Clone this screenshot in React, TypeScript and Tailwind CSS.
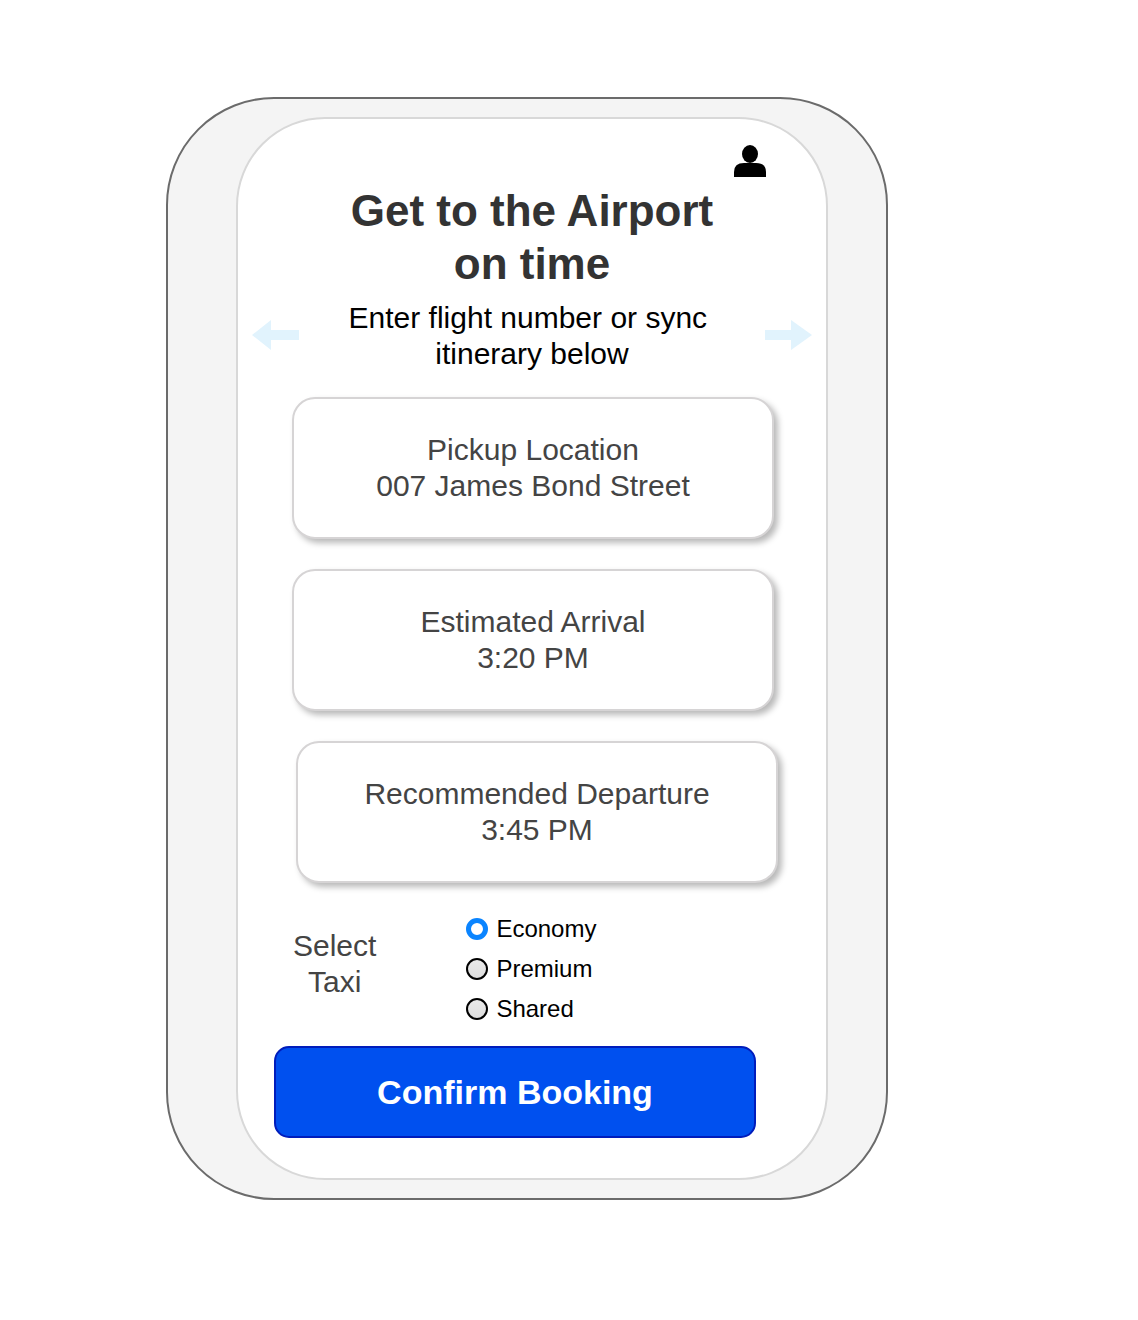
import { useState } from "react";

const details = [
  { label: "Pickup Location", value: "007 James Bond Street", place: "" },
  { label: "Estimated Arrival", value: "3:20 PM", place: "" },
  { label: "Recommended Departure", value: "3:45 PM", place: "ml-1" },
];

const taxis = ["Economy", "Premium", "Shared"];

function ArrowIcon({ path }: { path: string }) {
  return (
    <svg viewBox="0 0 47 30" className="block h-[30px] w-[47px] fill-[#e1f3fd]" aria-hidden="true">
      <path d={path} />
    </svg>
  );
}

function DetailCard({ label, value, place }: { label: string; value: string; place: string }) {
  return (
    <section
      className={`w-full max-w-[482px] rounded-[23px] border-2 border-[#d6d4d5] bg-white px-4 py-[33px] text-center text-[30px] leading-9 text-[#444444] shadow-[4px_4px_6px_rgba(0,0,0,0.28)] ${place}`}
    >
      <h2>{label}</h2>
      <p>{value}</p>
    </section>
  );
}

export default function App() {
  const [taxi, setTaxi] = useState("Economy");

  return (
    <main className="min-h-screen bg-white pt-[97px] pr-4 pb-[120px] pl-[166px] font-['Liberation_Sans',Arial,sans-serif]">
      <div className="max-w-[722px] rounded-[108px] border-2 border-[#6b6b6b] bg-[#f4f4f4] py-[18px] pr-[58px] pl-[68px]">
        <div className="rounded-[89px] border-2 border-[#d8d8d8] bg-white pt-[26px] pb-10">
          <div className="flex justify-end pr-[60px]">
            <button type="button" aria-label="Profile">
              <svg viewBox="0 0 32 32" className="block size-8 fill-black" aria-hidden="true">
                <ellipse cx="16" cy="9" rx="8" ry="9" />
                <path d="M0 32V27Q0 18 10 18H22Q32 18 32 27V32Z" />
              </svg>
            </button>
          </div>

          <h1 className="mt-[7px] text-center text-[44px] leading-[53px] font-bold text-[#333333]">
            Get to the Airport
            <br />
            on time
          </h1>

          <div className="mt-[10px] flex items-center justify-between px-[14px]">
            <button type="button" aria-label="Previous" className="pb-0.5">
              <ArrowIcon path="M0 15 19 0V10H47V20H19V30Z" />
            </button>
            <p className="text-center text-[30px] leading-9 text-black">
              Enter flight number or sync&nbsp;
              <br />
              itinerary below
            </p>
            <button type="button" aria-label="Next" className="pb-0.5">
              <ArrowIcon path="M47 15 26 0V10H0V20H26V30Z" />
            </button>
          </div>

          <div className="mt-[25px] flex flex-col gap-[30px] pr-12 pl-[54px]">
            {details.map((detail) => (
              <DetailCard key={detail.label} {...detail} />
            ))}
          </div>

          <fieldset className="mt-8 pl-[55px]">
            <div className="flex items-start gap-[90px]">
              <legend className="pt-[13px] text-center text-[30px] leading-9 text-[#444444]">
                Select
                <br />
                Taxi
              </legend>
              <div className="flex flex-col gap-3">
                {taxis.map((name) => (
                  <label key={name} className="flex items-center gap-2 text-2xl leading-7 text-black">
                    <input
                      type="radio"
                      name="taxi"
                      value={name}
                      checked={taxi === name}
                      onChange={() => setTaxi(name)}
                      className="size-[22px] appearance-none rounded-full border-2 border-black bg-linear-to-b from-[#e9e9e9] to-[#dddddd] checked:border-[5px] checked:border-[#0a84ff] checked:bg-white checked:bg-none"
                    />
                    {name}
                  </label>
                ))}
              </div>
            </div>
          </fieldset>

          <div className="mt-[23px] pr-[70px] pl-9">
            <button
              type="button"
              className="w-full rounded-[15px] border-2 border-[#001dbc] bg-[#0050ef] py-6 text-center text-[34px] leading-10 font-bold text-white"
            >
              Confirm Booking
            </button>
          </div>
        </div>
      </div>
    </main>
  );
}
